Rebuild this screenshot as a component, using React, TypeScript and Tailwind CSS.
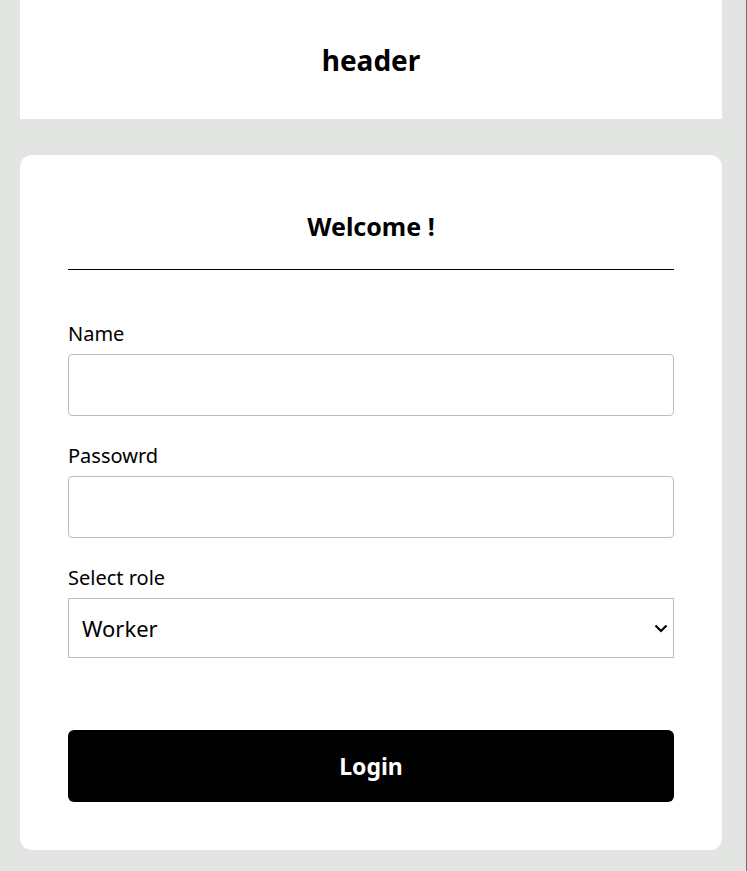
import React from 'react'

const App = () => {
  return (
    <div
      className="min-h-[871px] bg-[#e3e5e2] pl-[20px] pr-[24px] border-r border-[#6e6e6e] text-black"
      style={{ fontFamily: '"Noto Sans", "Open Sans", sans-serif' }}
    >
      {/* Header */}
      <header className="bg-white h-[119px] flex items-center justify-center">
        <h1 className="text-[28px] font-bold leading-[40px]">header</h1>
      </header>

      {/* Login card */}
      <div className="mt-[36px] bg-white rounded-[12px] px-[48px] pt-[48px] pb-[48px]">
        <h2 className="text-center text-[25px] font-bold leading-[46px]">Welcome !</h2>
        <hr className="mt-[20px] border-t border-black" />

        <form className="mt-[50px] flex flex-col" onSubmit={(e) => e.preventDefault()}>
          <label className="text-[20px] leading-[28px]">Name</label>
          <input
            type="text"
            className="mt-[6px] h-[62px] w-full border border-[#bdbdbd] rounded-[4px] px-3 outline-none"
          />

          <label className="mt-[26px] text-[20px] leading-[28px]">Passowrd</label>
          <input
            type="password"
            className="mt-[6px] h-[62px] w-full border border-[#bdbdbd] rounded-[4px] px-3 outline-none"
          />

          <label className="mt-[26px] text-[20px] leading-[28px]">Select role</label>
          <div className="relative mt-[6px]">
            <select className="appearance-none h-[60px] w-full border border-[#bdbdbd] pl-[13px] text-[22px] bg-white outline-none">
              <option>Worker</option>
              <option>Manager</option>
            </select>
            <svg
              className="absolute right-[6px] top-[23px] pointer-events-none"
              width="14"
              height="14"
              viewBox="0 0 14 14"
              fill="none"
              stroke="black"
              strokeWidth="2.2"
            >
              <path d="M1.5 4.5 L7 10 L12.5 4.5" />
            </svg>
          </div>

          <button
            type="submit"
            className="mt-[72px] h-[72px] w-full bg-black text-white rounded-[6px] text-[23px] font-bold"
          >
            Login
          </button>
        </form>
      </div>
    </div>
  )
}

export default App
